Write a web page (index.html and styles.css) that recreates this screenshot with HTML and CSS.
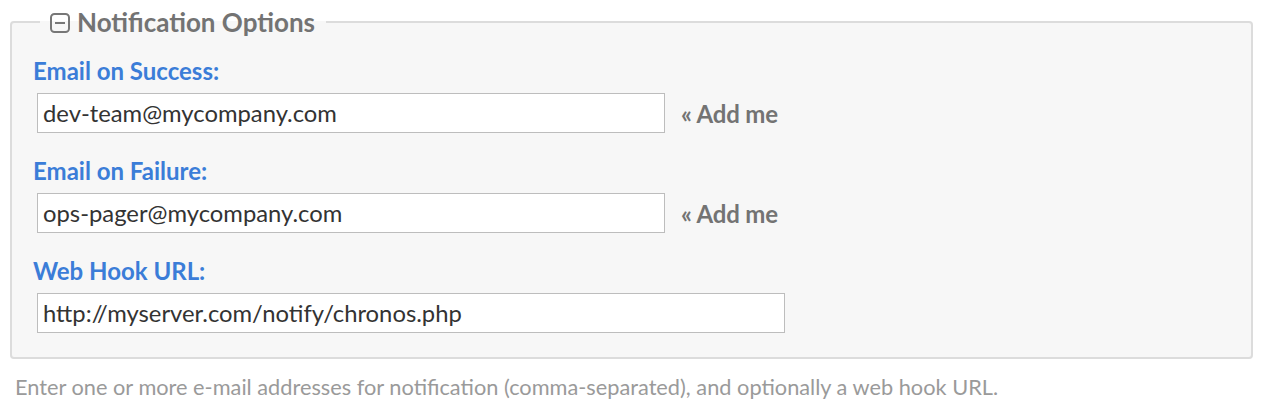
FILE: index.html
```html
<!DOCTYPE html>
<html>
<head>
<meta charset="utf-8">
<link rel="stylesheet" href="styles.css">
</head>
<body>
<div class="page">
  <fieldset class="box">
    <legend class="legend">
      <svg class="toggle" width="20" height="20" viewBox="0 0 20 20"><rect x="1" y="1" width="18" height="18" rx="3.5" fill="none" stroke="#777" stroke-width="2"/><line x1="5" y1="10" x2="15" y2="10" stroke="#777" stroke-width="2"/></svg>
      <span>Notification Options</span>
    </legend>
    <div class="field">
      <label class="label">Email on Success:</label>
      <div class="row">
        <input class="input" type="text" value="dev-team@mycompany.com">
        <span class="addme">« Add me</span>
      </div>
    </div>
    <div class="field">
      <label class="label">Email on Failure:</label>
      <div class="row">
        <input class="input" type="text" value="ops-pager@mycompany.com">
        <span class="addme">« Add me</span>
      </div>
    </div>
    <div class="field">
      <label class="label">Web Hook URL:</label>
      <div class="row">
        <input class="input wide" type="text" value="http://myserver.com/notify/chronos.php">
      </div>
    </div>
  </fieldset>
  <p class="help">Enter one or more e-mail addresses for notification (comma-separated), and optionally a web hook URL.</p>
</div>
</body>
</html>
```
FILE: styles.css
```css
html, body { margin: 0; padding: 0; background: #fff; }
body { font-family: Lato, "Open Sans", sans-serif; }
.page { padding: 7px 13px 0 10px; }
.box {
  margin: 0;
  border: 2px solid #dcdcdc;
  border-radius: 4px;
  background: #f7f7f7;
  padding: 0 21px 24px 21px;
}
.legend {
  margin-left: 7px;
  padding: 0 11px 0 10px;
  font-size: 26px;
  font-weight: 700;
  color: #737373;
  line-height: 30px;
  display: flex;
  align-items: center;
  gap: 7px;
}
.toggle { display: block; margin-top: 1px; }
.field { margin-top: 20px; }
.field + .field { margin-top: 24px; }
.label {
  display: block;
  font-size: 24px;
  font-weight: 700;
  color: #3b7dd8;
  line-height: 28px;
}
.row { display: flex; align-items: center; margin-top: 8px; margin-left: 4px; }
.input {
  box-sizing: border-box;
  width: 628px;
  height: 40px;
  border: 1px solid #bdbdbd;
  background: #fff;
  font-family: Lato, sans-serif;
  font-size: 23.8px;
  color: #333;
  padding: 0 5px;
  margin: 0;
  outline: none;
  border-radius: 0;
}
.input.wide { width: 748px; }
.addme {
  margin-left: 16px;
  font-size: 24px;
  font-weight: 700;
  color: #737373;
  letter-spacing: -0.2px;
}
.help {
  margin: 15px 0 0 5px;
  font-size: 21.75px;
  color: #9a9a9a;
  line-height: 26px;
}
```
